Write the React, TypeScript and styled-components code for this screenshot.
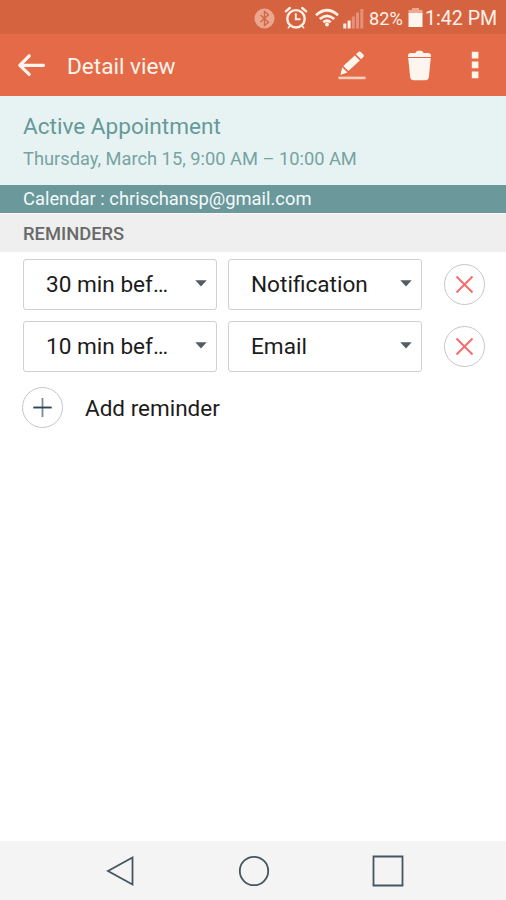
import React from 'react';
import styled, { createGlobalStyle } from 'styled-components';

const GlobalStyle = createGlobalStyle`
  * { box-sizing: border-box; }
  body { margin: 0; background: #fff; }
  button { font: inherit; color: inherit; background: none; border: 0; padding: 0; margin: 0; }
  svg { display: block; flex: none; }
`;

const Screen = styled.div`
  width: 506px;
  height: 900px;
  display: flex;
  flex-direction: column;
  overflow: hidden;
  background: #fff;
  font-family: Roboto, 'Liberation Sans', sans-serif;
  white-space: nowrap;
`;

const StatusBar = styled.div`
  height: 34px;
  flex: none;
  display: flex;
  align-items: center;
  padding: 2px 0 0 254px;
  background: #d66340;
  color: #fff2ea;
`;

const StatusItem = styled.span<{ $gap: number }>`
  flex: none;
  margin-left: ${(p) => p.$gap}px;
`;

const StatusText = styled.span<{ $size: number; $width: number }>`
  display: block;
  width: ${(p) => p.$width}px;
  margin-top: 1px;
  font-size: ${(p) => p.$size}px;
  line-height: 32px;
`;

const AppBar = styled.header`
  height: 62px;
  flex: none;
  display: flex;
  align-items: center;
  background: #e56a47;
  color: #fff4ee;
`;

const BackButton = styled.button`
  margin-left: 17px;
`;

const Title = styled.h1`
  margin: 4px 0 0 21px;
  width: 270px;
  font-size: 22.6px;
  font-weight: 400;
  line-height: 30px;
`;

const Actions = styled.div`
  display: flex;
  align-items: center;
`;

const Action = styled.button<{ $gap?: number }>`
  margin-left: ${(p) => p.$gap ?? 0}px;
`;

const Appointment = styled.section`
  height: 89px;
  flex: none;
  padding: 15px 23px 0;
  background: #e7f3f2;
  color: #669a99;
`;

const AppointmentName = styled.h2`
  margin: 0;
  font-size: 22.6px;
  font-weight: 400;
  line-height: 31px;
`;

const AppointmentTime = styled.div`
  margin-top: 4px;
  font-size: 18.28px;
  line-height: 26px;
  color: #76a3a2;
`;

const CalendarStrip = styled.div`
  height: 28px;
  flex: none;
  padding-left: 23px;
  font-size: 18.35px;
  line-height: 27px;
  background: #6b989b;
  color: #f2fafa;
`;

const SectionHeader = styled.h3`
  height: 39px;
  flex: none;
  margin: 0 0 7px;
  padding-left: 23px;
  border-top: 1px solid #f8f8f8;
  font-size: 18.35px;
  font-weight: 500;
  line-height: 40px;
  background: #efefef;
  color: #696969;
`;

const ReminderList = styled.main`
  flex: 1;
`;

const ReminderRow = styled.div`
  display: flex;
  align-items: center;
  height: 51px;
  margin-bottom: 11px;
  padding-left: 23px;
`;

const Select = styled.button`
  width: 194px;
  height: 51px;
  margin-right: 11px;
  padding: 0 9px 1px 22px;
  display: flex;
  align-items: center;
  justify-content: space-between;
  border: 1.5px solid #cdd1d1;
  border-radius: 3px;
  font-size: 22.6px;
  color: #1c1c1c;
`;

const RoundButton = styled.button<{ $gap?: number }>`
  width: 41px;
  height: 41px;
  margin-left: ${(p) => p.$gap ?? 0}px;
  display: flex;
  align-items: center;
  justify-content: center;
  border: 1px solid #c4c8c8;
  border-radius: 50%;
`;

const AddRow = styled.div`
  display: flex;
  align-items: center;
  padding: 4px 0 0 22px;
`;

const AddLabel = styled.span`
  margin: 0 0 0 22px;
  font-size: 22.5px;
  color: #1c1c1c;
`;

const NavBar = styled.nav`
  height: 59px;
  flex: none;
  display: flex;
  align-items: center;
  justify-content: center;
  gap: 102px;
  padding: 1px 0 0 1px;
  background: #f4f4f4;
`;

const NavIcon = styled.svg`
  width: 32px;
  height: 32px;
  fill: none;
  stroke: #45565f;
  stroke-width: 1.8px;
`;

const Bluetooth = () => (
  <svg width="21" height="21" viewBox="0 0 21 21">
    <circle cx="10.5" cy="10.5" r="10" fill="#eba68e" />
    <path d="M6.5 7l8 7.2-4 3.3v-14l4 3.3-8 7.2" fill="none" stroke="#d06746" strokeWidth="1.4" />
  </svg>
);

const Alarm = () => (
  <svg width="24" height="24" viewBox="0 0 24 24" fill="none" stroke="#fff0e5" strokeLinecap="round">
    <circle cx="12" cy="12.8" r="8.7" strokeWidth="2.4" />
    <path d="M1.8 5.3l4-3.3M22.2 5.3l-4-3.3" strokeWidth="2.3" />
    <path d="M11.8 8v5.2h4" strokeWidth="1.9" />
    <path d="M5.5 20.5l-1.2 1.2M18.5 20.5l1.2 1.2" strokeWidth="1.6" />
  </svg>
);

const Wifi = () => (
  <svg width="24" height="20" viewBox="0 0 24 20" fill="none" stroke="#fff0e5" strokeWidth="2.7">
    <path d="M1 7.3Q12-2.8 23 7.3" />
    <path d="M4.8 11Q12 4.7 19.2 11" />
    <path d="M8.3 14.3Q12 11.2 15.7 14.3" />
    <circle cx="12" cy="16.5" r="1.9" fill="#fff0e5" stroke="none" />
  </svg>
);

const Signal = () => (
  <svg width="21" height="21" viewBox="0 0 21 21">
    <path d="M0.3 15.5h3v5h-3zM4.6 12.5h3v8h-3z" fill="#fff0e5" />
    <path d="M8.8 8.5h3v12h-3zM13 4.5h3v16h-3zM17.3 1h3v19.5h-3z" fill="#e4907a" />
  </svg>
);

const Battery = () => (
  <svg width="15" height="20" viewBox="0 0 15 20">
    <path d="M4 0h7v2h3.5v4H0.5V2H4z" fill="#eda992" />
    <path d="M0.5 5h14v14H0.5z" fill="#fff5ef" />
  </svg>
);

const BackArrow = () => (
  <svg width="29" height="26" viewBox="0 0 29 26" fill="none" stroke="#fff5ef" strokeWidth="3.2" strokeLinecap="round" strokeLinejoin="round">
    <path d="M26.5 13.3H3M12.2 3.8L2.8 13.3l9.4 9" />
  </svg>
);

const Pencil = () => (
  <svg width="28" height="30" viewBox="0 0 28 30" fill="#fff5ef">
    <path d="M4.2 17.2l5.2 5.2-7 2.5z" />
    <path d="M5.3 15.9L16.8 5.4l5 5L10.4 20.9z" />
    <path d="M18 4.2L20.3 2q1.3-1.2 2.5 0l2.5 2.5q1.2 1.3 0 2.5L23 9.2z" />
    <path d="M0.5 26.6h27v2.6h-27z" fill="#fbd0bd" />
  </svg>
);

const Trash = () => (
  <svg width="25" height="31" viewBox="0 0 25 31" fill="#fff5ef">
    <path d="M1 7V5.5Q1 3.2 4 3h4.4Q9 1 11 .8h3Q16 1 16.6 3H21q3 .2 3 2.5V7z" />
    <path d="M1.2 8.1h22.6l-2 19.2q-.4 3-3.6 3H6.8q-3.2 0-3.6-3z" />
  </svg>
);

const More = () => (
  <svg width="8" height="28" viewBox="0 0 8 28" fill="#fff5ef">
    <path d="M0.8 0.8h6.6v6.6H0.8zM0.8 10.6h6.6v6.6H0.8zM0.8 20.6h6.6v6.6H0.8z" />
  </svg>
);

const Caret = () => (
  <svg width="12" height="8" viewBox="0 0 12 8">
    <path d="M0.3 0.3h11.4L6 6.5z" fill="#505d63" />
  </svg>
);

const Cross = () => (
  <svg width="19" height="19" viewBox="0 0 19 19" stroke="#f9696b" strokeWidth="1.9">
    <path d="M1.5 1.5l16 16M17.5 1.5l-16 16" />
  </svg>
);

const Plus = () => (
  <svg width="19" height="19" viewBox="0 0 19 19">
    <path d="M9.5 0v19" stroke="#7b8a94" strokeWidth="1.8" />
    <path d="M0.3 9.5h18.4" stroke="#2f4558" strokeWidth="1.9" />
  </svg>
);

const reminders = [
  { time: '30 min bef…', method: 'Notification' },
  { time: '10 min bef…', method: 'Email' },
];

export default function App() {
  return (
    <Screen>
      <GlobalStyle />
      <StatusBar>
        <Bluetooth />
        <StatusItem $gap={9}><Alarm /></StatusItem>
        <StatusItem $gap={7}><Wifi /></StatusItem>
        <StatusItem $gap={4}><Signal /></StatusItem>
        <StatusItem $gap={5}><StatusText $size={18.2} $width={39}>82%</StatusText></StatusItem>
        <Battery />
        <StatusItem $gap={2}><StatusText $size={19.6} $width={73}>1:42 PM</StatusText></StatusItem>
      </StatusBar>
      <AppBar>
        <BackButton aria-label="Back"><BackArrow /></BackButton>
        <Title>Detail view</Title>
        <Actions>
          <Action aria-label="Edit" $gap={1}><Pencil /></Action>
          <Action aria-label="Delete" $gap={41}><Trash /></Action>
          <Action aria-label="More" $gap={39}><More /></Action>
        </Actions>
      </AppBar>
      <Appointment>
        <AppointmentName>Active Appointment</AppointmentName>
        <AppointmentTime>Thursday, March 15, 9:00 AM – 10:00 AM</AppointmentTime>
      </Appointment>
      <CalendarStrip>Calendar : chrischansp@gmail.com</CalendarStrip>
      <SectionHeader>REMINDERS</SectionHeader>
      <ReminderList>
        {reminders.map((r) => (
          <ReminderRow key={r.time}>
            <Select>{r.time}<Caret /></Select>
            <Select>{r.method}<Caret /></Select>
            <RoundButton aria-label="Remove" $gap={11}><Cross /></RoundButton>
          </ReminderRow>
        ))}
        <AddRow>
          <RoundButton aria-label="Add"><Plus /></RoundButton>
          <AddLabel>Add reminder</AddLabel>
        </AddRow>
      </ReminderList>
      <NavBar>
        <NavIcon viewBox="0 0 32 32"><path d="M28.5 2.5v27L4 16z" /></NavIcon>
        <NavIcon viewBox="0 0 32 32"><circle cx="16" cy="16" r="14.2" /></NavIcon>
        <NavIcon viewBox="0 0 32 32"><path d="M1.5 1.5h29v29h-29z" /></NavIcon>
      </NavBar>
    </Screen>
  );
}
